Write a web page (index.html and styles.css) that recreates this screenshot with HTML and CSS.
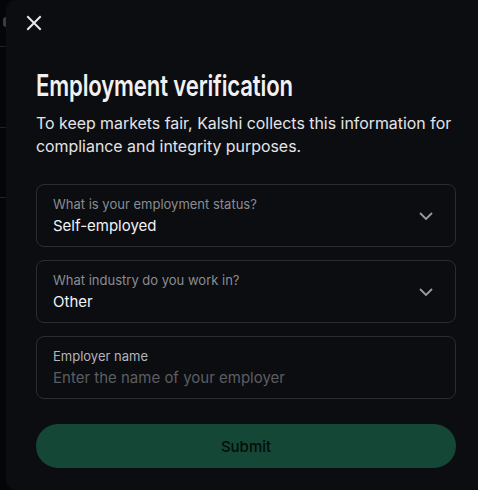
FILE: index.html
```html
<!DOCTYPE html>
<html>
<head>
<meta charset="utf-8">
<link rel="stylesheet" href="styles.css">
</head>
<body>
<div class="backdrop">
  <div class="bd-pill"></div>
  <div class="bd-line l1"></div>
  <div class="bd-line l2"></div>
  <div class="bd-line l3"></div>
</div>
<div class="modal">
  <button class="close" aria-label="Close">
    <svg width="16" height="16" viewBox="0 0 16 16"><path d="M2 2L14 14M14 2L2 14" stroke="#e8e8ea" stroke-width="2" stroke-linecap="square"/></svg>
  </button>
  <h1 class="title"><span class="title-text">Employment verification</span></h1>
  <p class="desc">To keep markets fair, Kalshi collects this information for compliance and integrity purposes.</p>
  <div class="fields">
    <div class="field">
      <div class="field-text">
        <div class="label">What is your employment status?</div>
        <div class="value">Self-employed</div>
      </div>
      <svg class="chev" width="14" height="8" viewBox="0 0 14 8"><path d="M1 1L7 7L13 1" fill="none" stroke="#9a9ba0" stroke-width="1.8"/></svg>
    </div>
    <div class="field">
      <div class="field-text">
        <div class="label">What industry do you work in?</div>
        <div class="value">Other</div>
      </div>
      <svg class="chev" width="14" height="8" viewBox="0 0 14 8"><path d="M1 1L7 7L13 1" fill="none" stroke="#9a9ba0" stroke-width="1.8"/></svg>
    </div>
    <div class="field">
      <div class="field-text">
        <div class="label light">Employer name</div>
        <div class="value placeholder">Enter the name of your employer</div>
      </div>
    </div>
  </div>
  <button class="submit">Submit</button>
</div>
</body>
</html>
```
FILE: styles.css
```css
html, body {
  margin: 0;
  padding: 0;
  height: 100%;
  background: #040507;
  overflow: hidden;
}
body {
  display: flex;
  font-family: Inter, "Noto Sans", sans-serif;
  color: #ececee;
}
.backdrop {
  position: relative;
  width: 6px;
  flex: none;
}
.bd-pill {
  position: absolute;
  left: 3px;
  top: 17px;
  width: 6px;
  height: 10px;
  border-radius: 3px;
  background: #3a3b3f;
}
.bd-line {
  position: absolute;
  left: 0;
  width: 6px;
  height: 1px;
  background: #1f2024;
}
.l1 { top: 46px; }
.l2 { top: 127px; }
.l3 { top: 197px; }
.modal {
  position: relative;
  flex: 1;
  background: #0c0d11;
  border-radius: 10px 0 0 10px;
  padding: 11px 22px 0 30px;
  height: 490px;
  box-sizing: border-box;
}
.close {
  background: none;
  border: 0;
  padding: 0;
  margin: 0 0 0 -14px;
  width: 24px;
  height: 24px;
  display: flex;
  align-items: center;
  justify-content: center;
  cursor: pointer;
}
.title {
  margin: 32px 0 0;
  font-family: Inter, "Noto Sans", sans-serif;
  font-weight: 600;
  font-size: 29.5px;
  line-height: 37px;
  color: #f1f1f3;
  white-space: nowrap;
}
.title-text {
  display: inline-block;
  transform: scaleX(0.75);
  transform-origin: left center;
  letter-spacing: -0.2px;
}
.desc {
  margin: 8px 0 0;
  font-size: 15.9px;
  line-height: 23px;
  color: #e4e4e7;
}
.fields {
  margin-top: 26px;
  display: flex;
  flex-direction: column;
  gap: 13px;
}
.field {
  height: 63px;
  box-sizing: border-box;
  border: 1px solid #2b2c31;
  border-radius: 8px;
  display: flex;
  align-items: center;
  padding: 0 22px 0 16px;
}
.field-text {
  flex: 1;
}
.label {
  font-size: 13px;
  line-height: 16px;
  color: #8b8c91;
}
.label.light {
  color: #b4b5ba;
}
.value {
  margin-top: 4px;
  font-size: 15px;
  line-height: 20px;
  color: #f2f2f4;
}
.value.placeholder {
  color: #5c5d62;
}
.chev {
  flex: none;
}
.submit {
  margin-top: 25px;
  width: 100%;
  height: 44px;
  border: 0;
  border-radius: 22px;
  background: #144736;
  color: #040c09;
  font-family: Inter, "Noto Sans", sans-serif;
  font-size: 15px;
  font-weight: 500;
  cursor: pointer;
}
```
